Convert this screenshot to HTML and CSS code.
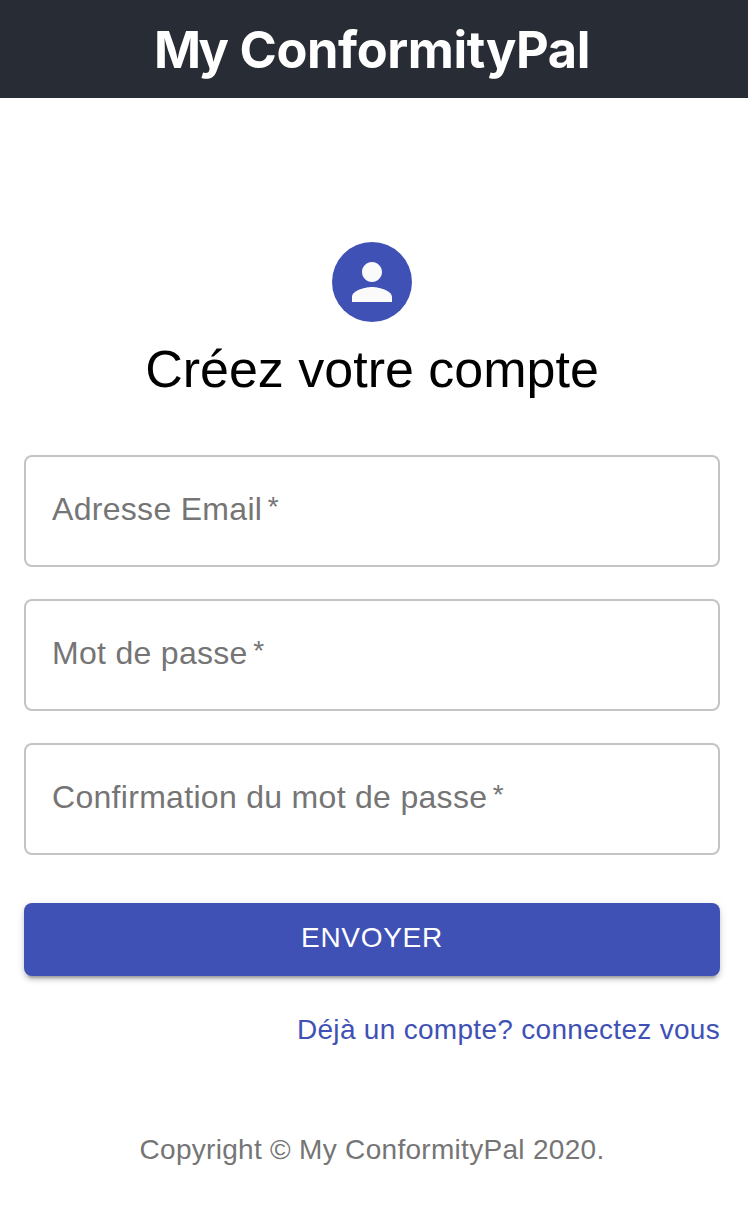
FILE: index.html
```html
<!DOCTYPE html>
<html lang="fr">
<head>
<meta charset="utf-8">
<title>My ConformityPal</title>
<link rel="stylesheet" href="styles.css">
</head>
<body>
<header class="header"><h1 class="brand"><span class="brand-prefix">My</span> <span>ConformityPal</span></h1></header>
<main class="main">
<div class="avatar"><svg class="avatar-icon" viewBox="0 0 24 24"><path d="M12 12c2.21 0 4-1.79 4-4s-1.79-4-4-4-4 1.79-4 4 1.790 4 4 4zm0 2c-2.670 0-8 1.340-8 4v2h16v-2c0-2.660-5.330-4-8-4z"/></svg></div>
<h2 class="title">Créez votre compte</h2>
<form class="form">
<div class="field"><span class="label">Adresse Email</span><span class="star">*</span></div>
<div class="field"><span class="label">Mot de passe</span><span class="star">*</span></div>
<div class="field"><span class="label">Confirmation du mot de passe</span><span class="star">*</span></div>
<button class="submit" type="button">ENVOYER</button>
</form>
<a class="login">Déjà un compte? connectez vous</a>
</main>
<footer class="footer">Copyright © My ConformityPal 2020.</footer>
</body>
</html>
```
FILE: styles.css
```css
* { box-sizing: border-box; }
body { margin: 0; min-height: 1212px; background: #fff; font-family: "Liberation Sans", Arial, sans-serif; }
.header { height: 98px; background: #282c34; color: #fff; text-align: center; padding-right: 4px; }
.brand { margin: 0; font: 700 50.5px/100px Inter, sans-serif; letter-spacing: -.4px; word-spacing: 2px; white-space: nowrap; }
.brand-prefix { letter-spacing: -3px; }
.main { display: flex; flex-direction: column; align-items: center; padding: 144px 28px 0 24px; }
.avatar { width: 80px; height: 80px; border-radius: 50%; background: #3f51b5; display: flex; align-items: center; justify-content: center; }
.avatar-icon { width: 60px; height: 60px; fill: #fafafa; }
.title { margin: 15px 0 0; font-size: 52px; font-weight: 400; line-height: 64px; white-space: nowrap; color: #000; }
.form { width: 100%; margin-top: 54px; display: flex; flex-direction: column; gap: 32px; }
.field { height: 112px; border: 2px solid #c4c4c4; border-radius: 8px; padding: 0 26px 4px; display: flex; align-items: center; gap: 5.5px; color: #757575; font-size: 32px; line-height: 36px; white-space: nowrap; letter-spacing: .3px; }
.star { font-size: 28px; line-height: 36px; padding-bottom: 4px; }
.submit { height: 73px; margin-top: 16px; border: 0; border-radius: 8px; background: #3f51b5; color: #fff; font: 400 28px/68px "Liberation Sans", Arial, sans-serif; letter-spacing: .7px; padding: 0 0 3px; box-shadow: 0 6px 2px -4px rgba(0,0,0,.2), 0 4px 4px rgba(0,0,0,.14), 0 2px 10px rgba(0,0,0,.12); }
.login { align-self: flex-end; margin-top: 34px; color: #3f51b5; font-size: 28px; line-height: 40px; letter-spacing: .3px; white-space: nowrap; }
.footer { margin-top: 80px; padding-right: 4px; text-align: center; color: #757575; font-size: 28px; line-height: 40px; letter-spacing: .3px; }
```
